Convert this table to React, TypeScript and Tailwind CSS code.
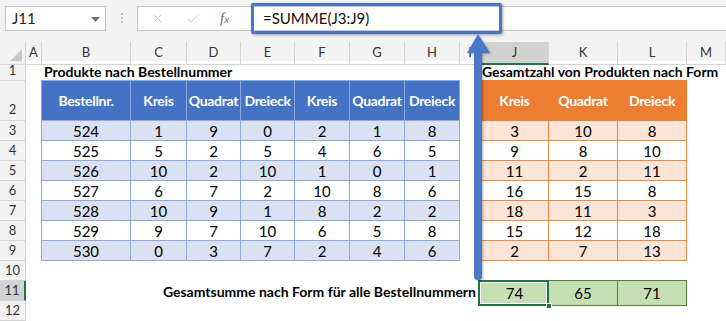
import { X, Check } from "lucide-react";

const COLS = ["A", "B", "C", "D", "E", "F", "G", "H", "I", "J", "K", "L", "M"];

const blueHead = ["Bestellnr.", "Kreis", "Quadrat", "Dreieck", "Kreis", "Quadrat", "Dreieck"];
const blueRows = [
  [524, 1, 9, 0, 2, 1, 8],
  [525, 5, 2, 5, 4, 6, 5],
  [526, 10, 2, 10, 1, 0, 1],
  [527, 6, 7, 2, 10, 8, 6],
  [528, 10, 9, 1, 8, 2, 2],
  [529, 9, 7, 10, 6, 5, 8],
  [530, 0, 3, 7, 2, 4, 6],
];

const orangeHead = ["Kreis", "Quadrat", "Dreieck"];
const orangeRows = [
  [3, 10, 8],
  [9, 8, 10],
  [11, 2, 11],
  [16, 15, 8],
  [18, 11, 3],
  [15, 12, 18],
  [2, 7, 13],
];

const totals = [74, 65, 71];

const rowNums = [1, 2, 3, 4, 5, 6, 7, 8, 9, 10, 11, 12];

function ColumnHeaders() {
  return (
    <div className="grid h-[19px] grid-cols-[26px_16px_89px_56px_54px_54px_55px_55px_55px_21px_68px_69px_69px_39px] bg-[#F3F3F3] text-[13px] text-[#333]">
      <div className="relative border-r border-b border-[#D4D4D4]">
        <svg className="absolute right-[3px] bottom-[3px]" width="12" height="12" viewBox="0 0 12 12">
          <polygon points="12,0 12,12 0,12" fill="#C8C8C8" />
        </svg>
      </div>
      {COLS.map((c) =>
        c === "J" ? (
          <div
            key={c}
            className="flex items-center justify-center border-r border-[#D4D4D4] bg-[#D2D2D2] border-b-2 border-b-[#217346] pt-[1px]"
          >
            {c}
          </div>
        ) : (
          <div key={c} className="flex items-center justify-center border-r border-b border-[#D4D4D4]">
            {c}
          </div>
        )
      )}
    </div>
  );
}

function RowHeaders() {
  return (
    <div className="flex w-[26px] flex-col bg-[#F3F3F3] text-[13px] text-[#333]">
      {rowNums.map((n) =>
        n === 2 ? (
          <div key={n} className="flex h-[40px] items-end justify-center border-r border-b border-[#D4D4D4] pb-[1px]">
            {n}
          </div>
        ) : n === 11 ? (
          <div
            key={n}
            className="flex h-[20px] items-center justify-center border-b border-[#D4D4D4] border-r-2 border-r-[#217346] bg-[#D2D2D2]"
          >
            {n}
          </div>
        ) : (
          <div key={n} className="flex h-[20px] items-center justify-center border-r border-b border-[#D4D4D4]">
            {n}
          </div>
        )
      )}
    </div>
  );
}

function BlueTable() {
  return (
    <div className="col-start-2 col-span-7 row-start-2 row-span-8 -mt-px -ml-px grid grid-cols-[89px_56px_54px_54px_55px_55px_55px] grid-rows-[40px_repeat(7,20px)] border-l border-t border-[#8EA9DB]">
      {blueHead.map((h, i) => (
        <div
          key={"h" + i}
          className="flex items-center justify-center whitespace-nowrap border-r border-b border-[#8EA9DB] bg-[#4472C4] text-[14px] font-bold tracking-[-0.3px] text-white"
        >
          {h}
        </div>
      ))}
      {blueRows.map((r, ri) =>
        r.map((v, ci) => (
          <div
            key={ri + "-" + ci}
            className={
              ri % 2 === 0
                ? "flex items-center justify-center border-r border-b border-[#8EA9DB] bg-[#D9E1F2] pt-[1px]"
                : "flex items-center justify-center border-r border-b border-[#8EA9DB] bg-white pt-[1px]"
            }
          >
            {v}
          </div>
        ))
      )}
    </div>
  );
}

function OrangeTable() {
  return (
    <div className="col-start-10 col-span-3 row-start-2 row-span-8 -mt-px -ml-px grid grid-cols-[68px_69px_69px] grid-rows-[40px_repeat(7,20px)] border-l border-t border-[#ED7D31]">
      {orangeHead.map((h, i) => (
        <div
          key={"h" + i}
          className="flex items-center justify-center border-r border-b border-[#ED7D31] bg-[#ED7D31] text-[14px] font-bold tracking-[-0.3px] text-white"
        >
          {h}
        </div>
      ))}
      {orangeRows.map((r, ri) =>
        r.map((v, ci) => (
          <div
            key={ri + "-" + ci}
            className={
              ri % 2 === 0
                ? "flex items-center justify-center border-r border-b border-[#F0893F] bg-[#FCE4D6] pt-[1px]"
                : "flex items-center justify-center border-r border-b border-[#F0893F] bg-white pt-[1px]"
            }
          >
            {v}
          </div>
        ))
      )}
    </div>
  );
}

function TotalsRow() {
  return (
    <div className="col-start-10 col-span-3 row-start-11 -mt-px -ml-px grid grid-cols-[68px_69px_69px] border-l border-t border-[#548235]">
      {totals.map((v, i) =>
        i === 0 ? (
          <div
            key={i}
            className="relative flex items-center justify-center border-r border-b border-[#548235] bg-[#C6E0B4] pt-[1px]"
          >
            {v}
            <div className="absolute -top-px -left-[3px] -right-px -bottom-px border-2 border-[#217346] shadow-[inset_0_0_0_1px_#ffffff]" />
            <div className="absolute -right-[4px] -bottom-[4px] h-[6px] w-[6px] border border-white bg-[#217346]" />
          </div>
        ) : (
          <div
            key={i}
            className="flex items-center justify-center border-r border-b border-[#548235] bg-[#C6E0B4] pt-[1px]"
          >
            {v}
          </div>
        )
      )}
    </div>
  );
}

function FormulaBar() {
  return (
    <div className="flex h-[42px] items-start bg-[#F3F3F3] pt-[6px] pl-[5px]">
      <div className="relative flex h-[25px] w-[101px] items-center border border-[#C6C6C6] bg-white pl-[6px] text-[15px] text-[#222]">
        J11
        <svg className="absolute right-[5px] top-[10px]" width="9" height="5" viewBox="0 0 9 5">
          <polygon points="0,0 9,0 4.5,5" fill="#707070" />
        </svg>
      </div>
      <div className="flex w-[31px] flex-col items-center gap-[2px] pt-[7px]">
        <span className="h-[2px] w-[2px] bg-[#BDBDBD]" />
        <span className="h-[2px] w-[2px] bg-[#BDBDBD]" />
        <span className="h-[2px] w-[2px] bg-[#BDBDBD]" />
      </div>
      <div className="flex h-[25px] flex-1 items-center border border-[#C6C6C6] border-r-0 bg-white">
        <div className="flex w-[111px] items-center">
          <X className="ml-[13px] h-[13px] w-[13px] text-[#BFBFBF]" strokeWidth={1.5} />
          <Check className="ml-[22px] h-[14px] w-[14px] text-[#BFBFBF]" strokeWidth={1.5} />
          <span className="ml-[20px] font-['Liberation_Serif',serif] text-[15px] italic text-[#6B6B6B]">
            f<span className="text-[11px]">x</span>
          </span>
        </div>
        <span className="ml-[14px] text-[15px] text-[#111]">=SUMME(J3:J9)</span>
      </div>
    </div>
  );
}

export default function App() {
  return (
    <div className="relative h-[321px] w-[726px] overflow-hidden bg-white font-['Lato','Liberation_Sans',sans-serif] text-[15px] text-black">
      <FormulaBar />
      <ColumnHeaders />
      <div className="flex">
        <RowHeaders />
        <div className="grid grid-cols-[16px_89px_56px_54px_54px_55px_55px_55px_21px_68px_69px_69px_39px] grid-rows-[20px_40px_repeat(10,20px)]">
          <div className="col-start-2 row-start-1 flex items-center whitespace-nowrap pl-[2px] pt-[1px] text-[14px] font-bold">
            Produkte nach Bestellnummer
          </div>
          <div className="col-start-10 col-span-4 row-start-1 flex items-center whitespace-nowrap pl-[1px] pt-[1px] text-[14px] font-bold">
            Gesamtzahl von Produkten nach Form
          </div>
          <BlueTable />
          <OrangeTable />
          <div className="col-start-1 col-span-9 row-start-11 flex items-center justify-end whitespace-nowrap pr-[5px] pt-[1px] text-[14px] font-bold">
            Gesamtsumme nach Form für alle Bestellnummern
          </div>
          <TotalsRow />
        </div>
      </div>

      {/* highlight around the formula input */}
      <div className="pointer-events-none absolute left-[251px] top-[3px] h-[31px] w-[251px] rounded-[2px] border-[3px] border-[#4A76C6] shadow-[1px_1px_3px_rgba(0,0,0,0.35)]" />

      {/* arrow pointing up from the total cell to the formula */}
      <svg className="pointer-events-none absolute left-0 top-0" width="726" height="321" viewBox="0 0 726 321">
        <defs>
          <filter id="arrowShadow" x="-50%" y="-10%" width="200%" height="120%">
            <feDropShadow dx="1" dy="1" stdDeviation="1" floodColor="#000" floodOpacity="0.3" />
          </filter>
        </defs>
        <g filter="url(#arrowShadow)" fill="#4A78C8">
          <polygon points="478,34 467,53 490,53" />
          <rect x="474" y="50" width="8" height="230" rx="4" />
        </g>
      </svg>
    </div>
  );
}
